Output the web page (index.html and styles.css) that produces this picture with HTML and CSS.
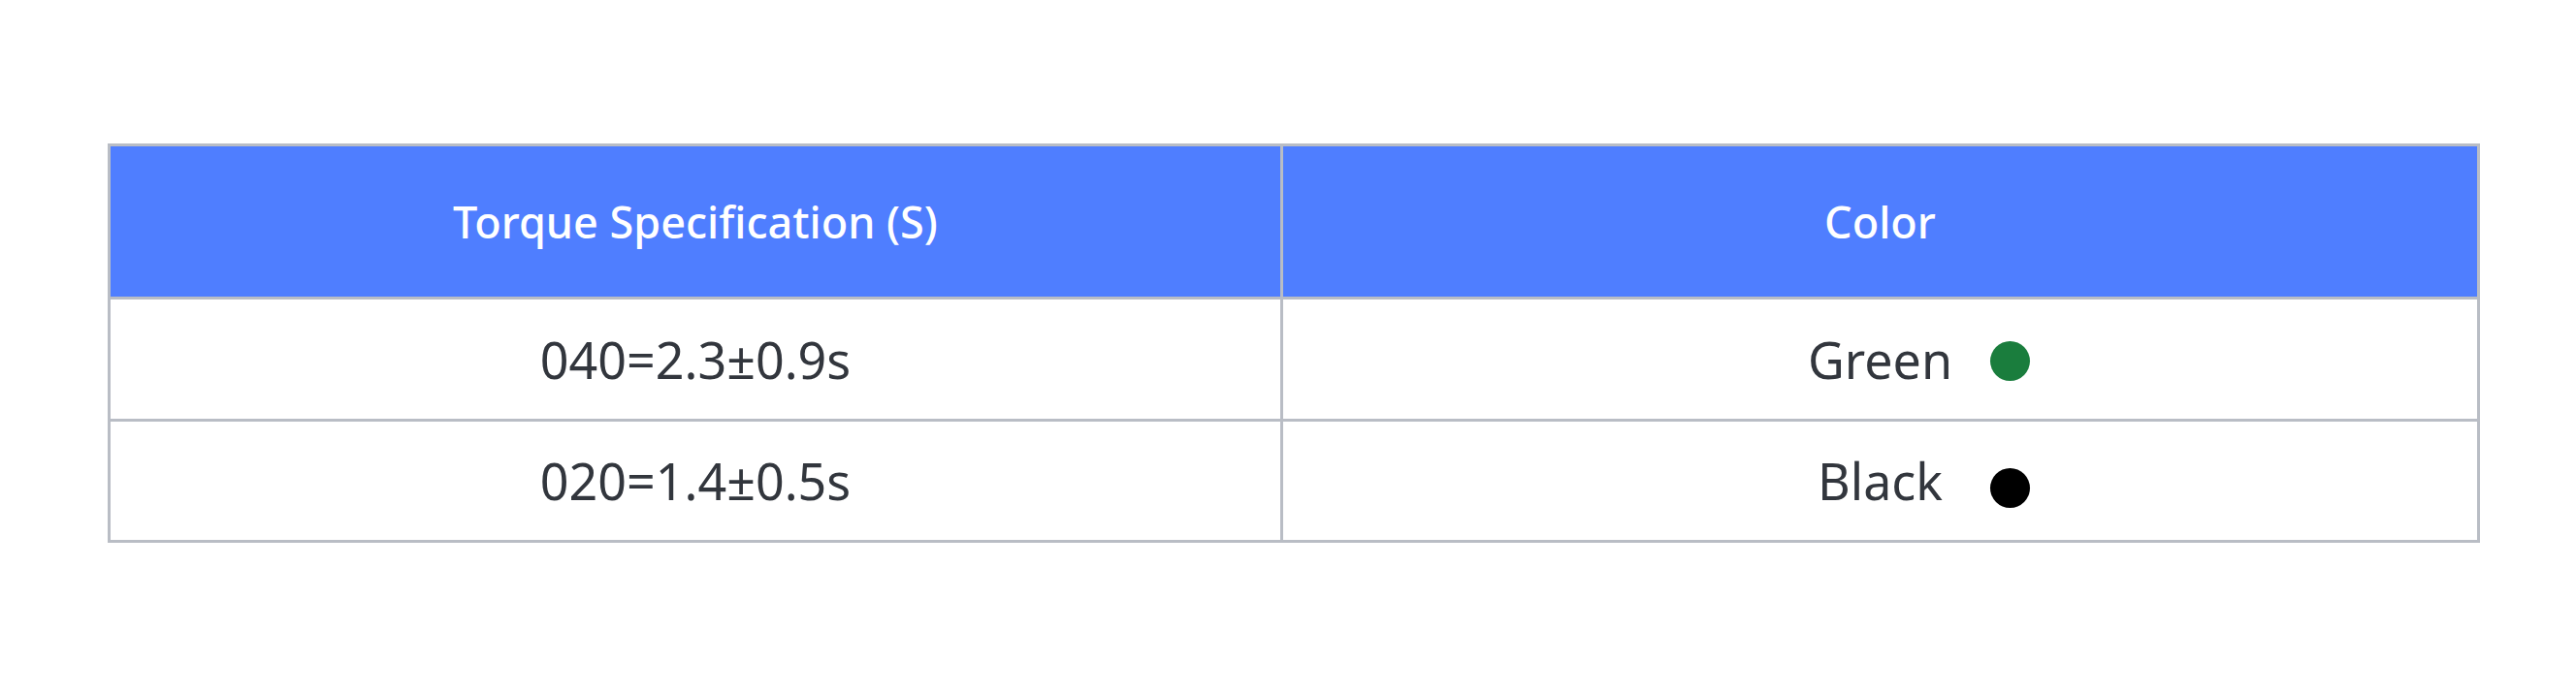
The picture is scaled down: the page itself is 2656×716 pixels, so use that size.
FILE: index.html
```html
<!DOCTYPE html>
<html lang="en">
<head>
<meta charset="utf-8">
<title>Torque Specification</title>
<link rel="stylesheet" href="styles.css">
</head>
<body>
  <div class="spec-table">
    <div class="cell head">Torque Specification (S)</div>
    <div class="cell head">Color</div>
    <div class="cell">040=2.3±0.9s</div>
    <div class="cell color-cell">
      <span class="color-name">Green</span>
      <span class="dot dot-green"></span>
    </div>
    <div class="cell">020=1.4±0.5s</div>
    <div class="cell color-cell">
      <span class="color-name">Black</span>
      <span class="dot dot-black"></span>
    </div>
  </div>
</body>
</html>
```
FILE: styles.css
```css
* { box-sizing: border-box; }
html, body { margin: 0; padding: 0; background: #ffffff; }
body {
  font-family: "Noto Sans", "Open Sans", sans-serif;
  width: 2656px;
  height: 716px;
  padding: 148px 0 0 111px;
}
.spec-table {
  width: 2446px;
  display: grid;
  grid-template-columns: 1209px 1234px;
  grid-template-rows: 158px 126px 125px;
  border-top: 3px solid #b9bdc5;
  border-left: 3px solid #b9bdc5;
}
.cell {
  border-right: 3px solid #b9bdc5;
  border-bottom: 3px solid #b9bdc5;
  display: flex;
  align-items: center;
  justify-content: center;
  font-size: 52px;
  color: #32363d;
  line-height: 1;
}
.cell.head {
  background: #4f7eff;
  color: #ffffff;
  font-size: 45px;
  font-weight: 500;
}
.color-cell {
  display: grid;
  grid-template-columns: 1fr 200px 1fr;
  align-items: center;
}
.color-name {
  grid-column: 2;
  text-align: center;
}
.dot {
  grid-column: 3;
  justify-self: start;
  width: 41px;
  height: 41px;
  border-radius: 50%;
  margin-left: 13px;
  margin-top: 4px;
}
.dot-green { background: #1a7d3d; }
.dot-black { background: #000000; margin-top: 14px; }
```
